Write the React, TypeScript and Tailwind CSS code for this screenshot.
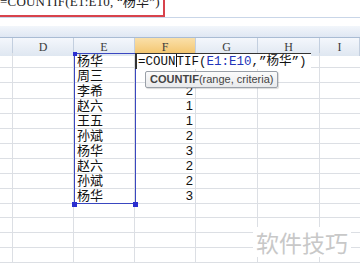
const cols = ['', 'D', 'E', 'F', 'G', 'H', 'I'];
const names = ['杨华', '周三', '李希', '赵六', '王五', '孙斌', '杨华', '赵六', '孙斌', '杨华'];
const counts = ['', '', '2', '1', '1', '2', '3', '2', '2', '3'];
const grid = 'grid grid-cols-[13px_61px_61px_61px_62px_62px_1fr]';

export default function App() {
  const rows = Array.from({ length: 14 }, (_, i) => i);
  return (
    <div className="relative w-[360px] h-[270px] overflow-hidden bg-white font-['Liberation_Sans','Noto_Sans_CJK_SC',sans-serif]">
      {/* formula bar, cut off at the top */}
      <div className="h-[17px] w-[165px] border-r-2 border-b-2 border-[#d8434c] overflow-hidden">
        <div className="mt-[-9px] text-[13px] leading-[22px] tracking-[0.2px] text-[#222] font-['Liberation_Serif','Noto_Sans_CJK_SC',serif] whitespace-nowrap">
          =COUNTIF(E1:E10, “杨华”)
        </div>
      </div>
      <div className="h-[1px] bg-[#c9d6e8]" />
      <div className="h-[8px] bg-white" />
      <div className="h-[11px] bg-gradient-to-b from-[#f2f6fb] to-[#dfe7f3]" />

      {/* column headers */}
      <div className={`${grid} h-[16px] border-t border-b border-[#a9bcd4]`}>
        {cols.map((c, i) => (
          <div
            key={i}
            className={`flex items-center justify-center border-r border-[#c3cfdf] text-[12px] font-['Liberation_Serif',serif] text-[#3c3c3c] ${
              c === 'F' ? 'bg-gradient-to-b from-[#fae0a9] to-[#f2c265]' : 'bg-gradient-to-b from-[#f4f7fc] to-[#dfe7f1]'
            }`}
          >
            {c}
          </div>
        ))}
      </div>

      {/* cells */}
      <div className="relative">
        {rows.map((r) => (
          <div key={r} className={`${grid} h-[15px]`}>
            <div className="border-r border-b border-[#dcdfe4]" />
            <div className="border-r border-b border-[#dcdfe4]" />
            <div className="border-r border-b border-[#dcdfe4] pl-[3px] text-[13px] leading-[14px] text-[#111] font-['Noto_Sans_CJK_SC',sans-serif]">
              {names[r] ?? ''}
            </div>
            <div className="border-r border-b border-[#dcdfe4] pr-[2px] text-right text-[13px] leading-[15px] text-[#111] font-['Liberation_Sans',sans-serif]">
              {counts[r] ?? ''}
            </div>
            <div className="border-r border-b border-[#dcdfe4]" />
            <div className="border-r border-b border-[#dcdfe4]" />
            <div className="border-b border-[#dcdfe4]" />
          </div>
        ))}

        {/* selection E1:E10 */}
        <div className="absolute left-[74px] top-0 w-[62px] h-[151px] border border-[#3a47c0] pointer-events-none" />
        <div className="absolute left-[73px] top-[-1px] w-[4px] h-[4px] bg-[#2b2fd0]" />
        <div className="absolute left-[72px] top-[149px] w-[5px] h-[5px] bg-[#2b2fd0]" />
        <div className="absolute left-[133px] top-[149px] w-[5px] h-[5px] bg-[#2b2fd0]" />

        {/* F1 in edit mode */}
        <div className="absolute left-[135px] top-0 h-[16px] w-[176px] bg-white border-l-2 border-t border-[#333] pl-[1px] text-[12.5px] leading-[15px] text-[#111] font-['Liberation_Mono','Noto_Sans_CJK_SC',monospace] whitespace-nowrap">
          =COUN<span className="inline-block w-[1px] h-[13px] bg-[#111] align-[-2px]" />TIF(<span className="text-[#2234b8]">E1:E10</span>,”杨华”)
        </div>

        {/* function tooltip */}
        <div className="absolute left-[145px] top-[18px] h-[17px] px-[4px] flex items-center rounded-[2px] border border-[#9aa0a8] bg-gradient-to-b from-[#fbfbfb] to-[#e9eaec] text-[11px] text-[#444] whitespace-nowrap shadow-[1px_1px_1px_rgba(0,0,0,0.15)]">
          <span className="font-bold">COUNTIF</span>(range, criteria)
        </div>
      </div>

      {/* watermark */}
      <div className="absolute left-[253px] top-[227px] pl-[3px] pr-[3px] bg-white text-[23px] leading-[30px] text-[#c8c8c8] font-['Noto_Sans_CJK_SC',sans-serif]">
        软件技巧
      </div>
    </div>
  );
}
